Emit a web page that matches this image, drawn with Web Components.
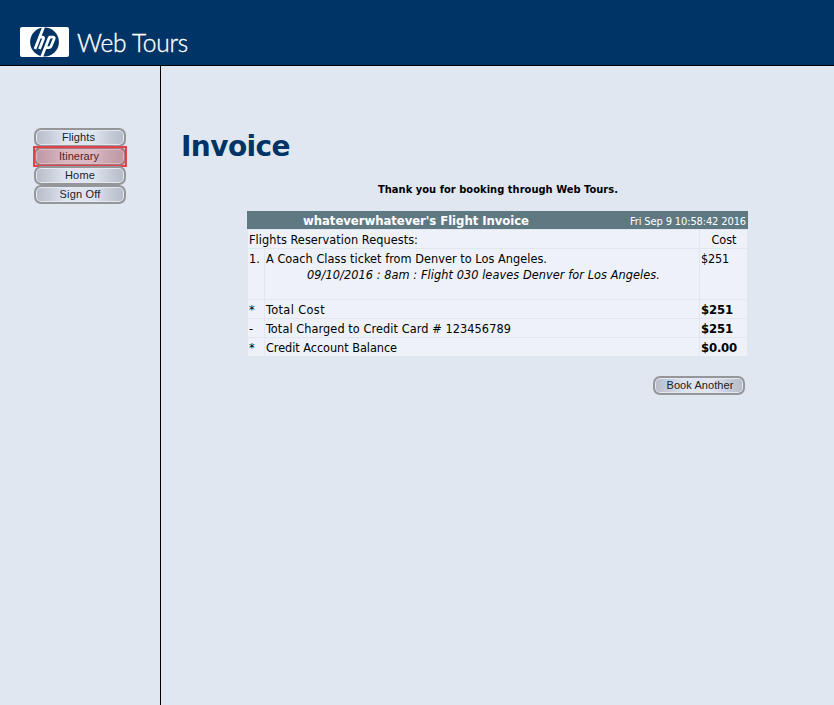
<!DOCTYPE html>
<html lang="en"><head><meta charset="utf-8"><title>Web Tours</title>
<style>html,body{margin:0;height:100%;background:#e0e7f1;overflow:hidden}</style></head>
<body><tour-page></tour-page>
<script>
const define=(name,html,init)=>customElements.define(name,class extends HTMLElement{
  connectedCallback(){
    if(this.shadowRoot)return;
    this.attachShadow({mode:'open'}).innerHTML=html;
    if(init)init.call(this,this.shadowRoot);
  }
});
// A single line of text whose tracking is adjusted to span the width in "w".
define('fit-text',`<style>:host{display:inline-block;white-space:pre;vertical-align:top}span{display:inline-block}</style><span><slot></slot></span>`,function(r){
  const s=r.querySelector('span'),w=+this.getAttribute('w'),n=this.textContent.length;
  this.style.width=w+'px';
  s.style.letterSpacing=(w-s.getBoundingClientRect().width)/n+'px';
});
define('hp-logo',`<style>:host{display:block;width:49px;height:30px}svg{display:block}</style>
<svg width="49" height="30" viewBox="0 0 49 30"><rect width="49" height="30" rx="2" fill="#fff"/>
<circle cx="24.5" cy="15" r="14.4" fill="#003366"/>
<g fill="none" stroke="#fff" stroke-width="2.8" stroke-linejoin="round">
<path d="M23.6 0L15 22M19.4 10.2H22.4Q24 10.2 23.4 12L19.5 22"/>
<path d="M29.4 10.2L21.6 30M28.6 10.2H33Q34.7 10.2 34 12L31 19.2Q30.4 20.7 28.7 20.7H25.4"/></g></svg>`);
define('tour-header',`<style>:host{display:flex;box-sizing:border-box;height:66px;background:#003366;border-bottom:1px solid #000;padding:27px 0 0 20px;gap:8px;color:#fff}
fit-text{font:300 24.5px/32px Lato,sans-serif;-webkit-text-stroke:.35px #fff}</style><hp-logo></hp-logo><fit-text w="111">Web Tours</fit-text>`);
define('pill-button',`<style>:host{display:flex;justify-content:center;box-sizing:border-box;width:92px;height:19px;border:2px solid #95969a;border-radius:7px;box-shadow:inset 0 0 0 1px #e3e8f1;background:linear-gradient(90deg,#bbbfcc 3%,#c6cbd8 14%,#dfe5f0 34%,#dfe5f0 64%,#c4c9d6 86%,#b9becb 97%);color:#202024;font:11px/15px "Liberation Sans",Arial,sans-serif;position:relative}
:host([active])::after{content:"";position:absolute;inset:-3px;border:2px solid #e0434b;background:#d1303840;box-sizing:border-box}
:host([active]){color:#25191c}</style><slot></slot>`);
define('tour-nav',`<style>:host{display:flex;flex-direction:column;box-sizing:border-box;width:161px;border-right:1px solid #000;padding:62px 0 0 34px}</style>
<pill-button><fit-text w="33" style="margin-right:3px">Flights</fit-text></pill-button><pill-button active><fit-text w="40" style="margin-right:2px">Itinerary</fit-text></pill-button><pill-button><fit-text w="30">Home</fit-text></pill-button><pill-button><fit-text w="41">Sign Off</fit-text></pill-button>`);
define('invoice-table',`<style>:host{display:block;width:501px;font:12.6px/19px "DejaVu Sans Condensed","DejaVu Sans",sans-serif;font-stretch:condensed;color:#000}
.head{height:18px;background:#5f7982;color:#fff;display:flex;padding-left:56px}
.head fit-text:first-child{font-weight:bold;font-size:13px}.head fit-text:last-child{font-size:11px;margin-left:101px;line-height:21px}
.grid{display:grid;grid-template-columns:16px 434px 47px;grid-template-rows:18px 50px repeat(3,18px);gap:1px;margin:1px 1px 0}
.grid>div{background:#eef2f8;padding-left:1px;white-space:nowrap}.wide{grid-column:span 2}.cost{text-align:center}.i{font-style:italic;padding-left:41px;line-height:14px;height:14px}.grid>.b{font-weight:bold;font-size:13px}</style>
<div class="head"><fit-text w="226">whateverwhatever's Flight Invoice</fit-text><fit-text w="116">Fri Sep 9 10:58:42 2016</fit-text></div>
<div class="grid"><div class="wide"><fit-text w="169">Flights Reservation Requests:</fit-text></div><div class="cost"><fit-text w="25">Cost</fit-text></div>
<div>1.</div><div><fit-text w="281">A Coach Class ticket from Denver to Los Angeles.</fit-text><div class="i"><fit-text w="353">09/10/2016 : 8am : Flight 030 leaves Denver for Los Angeles.</fit-text></div></div><div><fit-text w="28">$251</fit-text></div>
<div>*</div><div><fit-text w="59">Total Cost</fit-text></div><div class="b"><fit-text w="32">$251</fit-text></div>
<div>-</div><div><fit-text w="245">Total Charged to Credit Card # 123456789</fit-text></div><div class="b"><fit-text w="32">$251</fit-text></div>
<div>*</div><div><fit-text w="131">Credit Account Balance</fit-text></div><div class="b"><fit-text w="36">$0.00</fit-text></div></div>`);
define('tour-invoice',`<style>:host{display:flex;flex-direction:column;align-items:flex-start;flex:1;color:#003366;font-family:"DejaVu Sans Condensed","DejaVu Sans",sans-serif;font-stretch:condensed}
h1{margin:63px 0 0 20px;font:bold 28px/35px "DejaVu Sans",sans-serif;height:36px}.thanks{margin:15px 0 13px 217px;font-weight:bold;font-size:11px;line-height:19px;height:18px;color:#000}invoice-table{margin-left:86px}pill-button{margin:20px 0 0 492px}pill-button fit-text{margin-left:2px}</style>
<h1><fit-text w="109">Invoice</fit-text></h1><div class="thanks"><fit-text w="240">Thank you for booking through Web Tours.</fit-text></div><invoice-table></invoice-table><pill-button><fit-text w="67">Book Another</fit-text></pill-button>`);
define('tour-page',`<style>:host{display:flex;flex-direction:column;width:834px;height:705px;background:#e0e7f1}main{display:flex;flex:1}</style><tour-header></tour-header><main><tour-nav></tour-nav><tour-invoice></tour-invoice></main>`);
</script></body></html>
